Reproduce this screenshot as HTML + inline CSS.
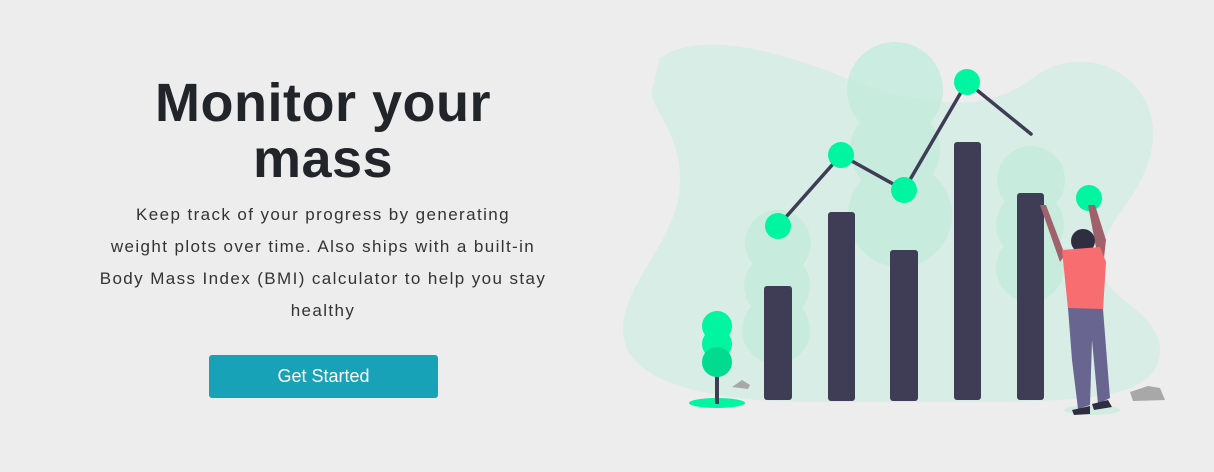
<!DOCTYPE html>
<html><head><meta charset="utf-8"><style>
html,body{margin:0;padding:0;background:#ededed;width:1214px;height:472px;overflow:hidden;font-family:"Liberation Sans",sans-serif;}
h1{position:absolute;left:60px;width:526px;top:75px;margin:0;text-align:center;font-size:54px;line-height:56px;font-weight:bold;color:#212529;letter-spacing:0.5px;}
p{position:absolute;left:23px;width:600px;top:199px;margin:0;text-align:center;font-size:17px;line-height:32px;color:#333;letter-spacing:1.4px;white-space:nowrap;}
.btn{position:absolute;left:209px;top:355px;width:229px;height:43px;background:#17a2b8;border-radius:3px;color:#fff;font-size:18px;line-height:43px;text-align:center;}
svg{position:absolute;left:0;top:0;}
</style></head><body>
<h1>Monitor your<br>mass</h1>
<p>Keep track of your progress by generating<br>weight plots over time. Also ships with a built-in<br>Body Mass Index (BMI) calculator to help you stay<br>healthy</p>
<div class="btn">Get Started</div>
<svg width="1214" height="472">
<path d="M660,58 C700,30 780,50 850,80 C930,110 990,110 1030,80 C1080,40 1150,70 1153,130 C1155,190 1100,220 1100,260 C1100,300 1160,310 1160,350 C1160,400 1080,400 1000,402 L800,402 C700,400 623,380 623,330 C623,280 680,240 680,180 C680,130 650,110 652,90 Z" fill="#d8ede5"/>
<g fill="#c3ecdd" opacity="0.8">
<circle cx="895" cy="90" r="48"/><circle cx="895" cy="150" r="45"/><circle cx="900" cy="215" r="52"/>
<circle cx="778" cy="243" r="33"/><circle cx="777" cy="286" r="33"/><circle cx="776" cy="330" r="34"/>
<circle cx="1031" cy="180" r="34"/><circle cx="1030" cy="225" r="34"/><circle cx="1030" cy="268" r="34"/>
</g>
<g fill="#3f3d56">
<rect x="764" y="286" width="28" height="114" rx="3"/>
<rect x="828" y="212" width="27" height="189" rx="3"/>
<rect x="890" y="250" width="28" height="151" rx="3"/>
<rect x="954" y="142" width="27" height="258" rx="3"/>
<rect x="1017" y="193" width="27" height="207" rx="3"/>
</g>
<polyline points="778,226 841,155 904,190 967,82 1031,134" fill="none" stroke="#3f3d56" stroke-width="3.5" stroke-linecap="round"/>
<g fill="#00f5a0">
<circle cx="778" cy="226" r="13"/><circle cx="841" cy="155" r="13"/><circle cx="904" cy="190" r="13"/><circle cx="967" cy="82" r="13"/><circle cx="1089" cy="198" r="13"/>
</g>
<ellipse cx="717" cy="403" rx="28" ry="5" fill="#00f5a0"/>
<rect x="715" y="370" width="4" height="34" fill="#3f3d56"/>
<circle cx="717" cy="326" r="15" fill="#00f5a0"/><circle cx="717" cy="344" r="15" fill="#00f5a0"/><circle cx="717" cy="362" r="15" fill="#00db90"/>
<path d="M732,387 L742,380 L750,385 L748,389 Z" fill="#a8a8a8"/>
<path d="M1130,392 L1148,386 L1160,388 L1165,400 L1133,401 Z" fill="#a8a8a8"/>
<ellipse cx="1092" cy="410" rx="28" ry="5" fill="#d3ece2"/>
<path d="M1040,205 L1046,205 L1065,255 L1060,262 Z" fill="#a0616a"/>
<path d="M1088,205 L1095,205 L1106,240 L1104,258 L1098,258 Z" fill="#a0616a"/>
<circle cx="1083" cy="241" r="12" fill="#2f2e41"/>
<path d="M1062,250 L1100,247 L1106,262 L1103,310 L1068,309 Z" fill="#f86d70"/>
<path d="M1068,308 L1103,309 L1110,398 L1098,404 L1092,340 L1090,405 L1078,409 L1072,360 Z" fill="#696591"/>
<path d="M1072,410 L1090,406 L1090,414 L1074,415 Z M1092,404 L1108,400 L1112,407 L1094,410 Z" fill="#2f2e41"/>
</svg>
</body></html>
